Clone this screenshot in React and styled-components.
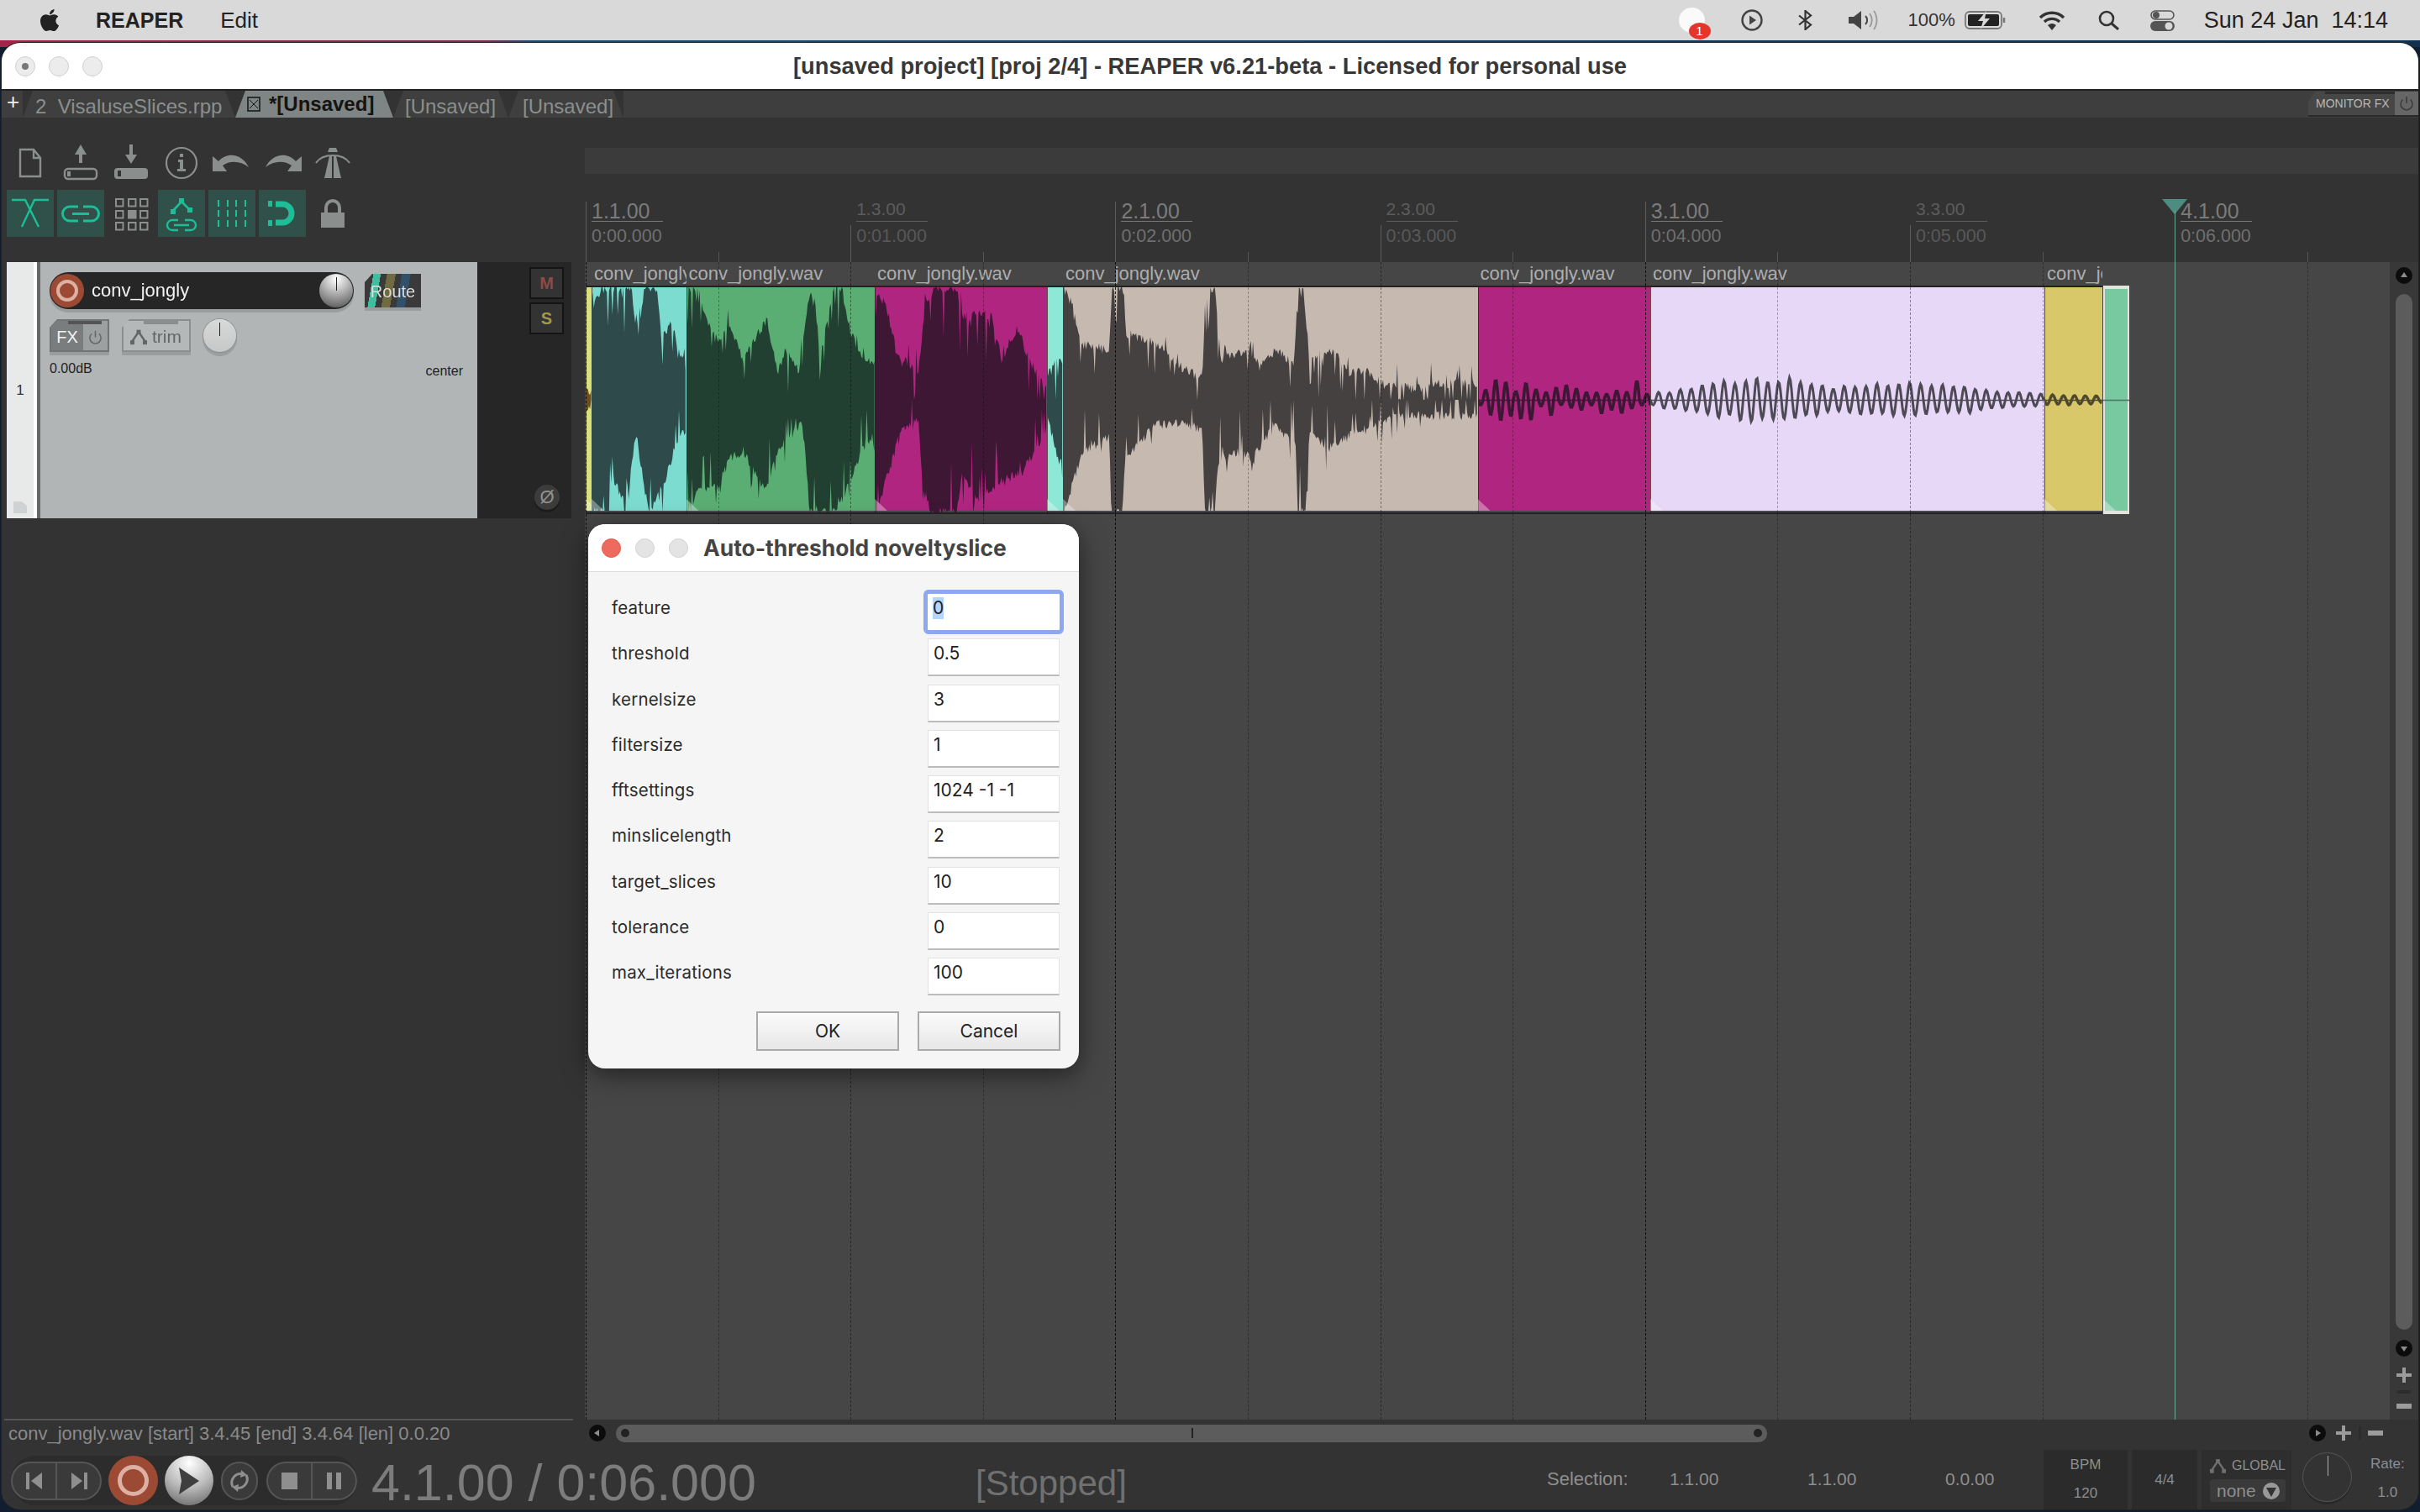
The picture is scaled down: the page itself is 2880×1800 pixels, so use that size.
import styled, { createGlobalStyle } from 'styled-components'
import { FaApple } from 'react-icons/fa'

const GlobalStyle = createGlobalStyle`
    html, body {
        margin: 0;
        padding: 0;
        background: #0f2238;
    }
    * { box-sizing: border-box; }
`

const SECOND = 315.2
const GREY = '#8a8f8e'
const TEAL = '#1dbd97'

// ---- waveform data, read off the screenshot ----

const z7 = pts => pts.map(([x, y]) => [690 + x / 1.96, 230 + y / 3])
const z8 = pts => pts.map(([x, y]) => [1480 + x / 1.425, 230 + y / 3])

function makeRandom(seed) {
    let s = seed
    return () => {
        s = (s * 16807) % 2147483647
        return s / 2147483647
    }
}

function lerp(pts, x) {
    if (x <= pts[0][0]) return pts[0][1]
    for (let i = 1; i < pts.length; i++) {
        if (x <= pts[i][0]) {
            const [x0, y0] = pts[i - 1]
            const [x1, y1] = pts[i]
            return y0 + ((y1 - y0) * (x - x0)) / (x1 - x0)
        }
    }
    return pts[pts.length - 1][1]
}

function spike(rand) {
    const r = rand()
    if (r > 0.86) return rand() * 55
    if (r < 0.06) return -rand() * 28
    return 0
}

function wavePath(top, bot, x0, x1, seed) {
    const rand = makeRandom(seed)
    const upper = []
    const lower = []
    for (let x = x0; x <= x1; x += 1.3) {
        const t = lerp(top, x) + (rand() - 0.5) * 12 + spike(rand)
        const b = lerp(bot, x) + (rand() - 0.5) * 12 - spike(rand)
        upper.push(`${x.toFixed(1)} ${Math.max(342, Math.min(476, t)).toFixed(1)}`)
        lower.unshift(`${x.toFixed(1)} ${Math.min(610, Math.max(476, b)).toFixed(1)}`)
    }
    return `M${upper.join('L')}L${lower.join('L')}Z`
}

function oscPath(amps, x0, x1, period, seed, wild) {
    const rand = makeRandom(seed)
    const out = []
    let lastHalf = -1
    let swing = 1
    for (let x = x0; x <= x1; x += 1.2) {
        const half = Math.floor((x - x0) / (period / 2))
        if (half !== lastHalf) {
            lastHalf = half
            swing = wild ? 0.35 + rand() * 0.95 : 0.8 + rand() * 0.3
        }
        const theta = (2 * Math.PI * (x - x0)) / period
        const y = 476 + Math.sin(theta) * lerp(amps, x) * swing
        out.push(`${x.toFixed(1)} ${y.toFixed(1)}`)
    }
    return `M${out.join('L')}`
}

const ITEMS = [
    {
        x0: 697, x1: 704, bg: '#d9e27a', ink: '#6b4d1e',
        top: z7([[13, 680], [28, 720]]), bot: z7([[13, 770], [28, 760]]),
    },
    {
        x0: 704, x1: 816.5, bg: '#7cdccf', ink: '#2f4a4a', name: 'conv_jongly.wav',
        top: z7([[30, 420], [45, 340], [100, 340], [120, 340], [135, 520], [150, 340], [180, 340], [190, 520], [215, 460], [230, 570], [245, 570]]),
        bot: z7([[30, 1140], [70, 1140], [75, 1000], [110, 1140], [130, 840], [160, 1140], [175, 1100], [200, 1020], [230, 870], [245, 850]]),
    },
    {
        x0: 816.5, x1: 1041, bg: '#5aad73', ink: '#224031', name: 'conv_jongly.wav',
        top: z7([[250, 340], [280, 340], [290, 440], [320, 520], [350, 480], [380, 590], [435, 450], [460, 640], [480, 560], [510, 640], [530, 400], [545, 340], [560, 590], [590, 340], [610, 340], [630, 490], [660, 600], [685, 600]]),
        bot: z7([[255, 1140], [280, 1050], [320, 1050], [350, 950], [380, 920], [430, 1060], [470, 900], [520, 820], [535, 1140], [600, 1140], [640, 980], [670, 880], [685, 910]]),
    },
    {
        x0: 1041, x1: 1246, bg: '#b02580', ink: '#3e1735', name: 'conv_jongly.wav',
        top: z7([[690, 340], [715, 400], [740, 580], [790, 640], [805, 400], [830, 340], [880, 340], [890, 440], [920, 430], [960, 440], [985, 600], [1020, 480], [1050, 600], [1085, 700]]),
        bot: z7([[690, 1140], [720, 1000], [750, 840], [790, 810], [800, 1050], [820, 1140], [880, 1140], [890, 1000], [930, 1100], [980, 1030], [1030, 1000], [1085, 850]]),
    },
    {
        x0: 1246, x1: 1265, bg: '#8ee8d8', ink: '#2f4a4a',
        top: z7([[1092, 640], [1115, 600], [1125, 600]]), bot: z7([[1092, 800], [1115, 950], [1125, 970]]),
    },
    {
        x0: 1265, x1: 1758.6, bg: '#c5b9b0', ink: '#454141', name: 'conv_jongly.wav',
        top: [
            ...z7([[1130, 340], [1150, 400], [1170, 540], [1235, 560], [1242, 340], [1268, 340], [1275, 500], [1350, 540], [1400, 620], [1452, 660], [1460, 340], [1482, 340], [1495, 600]]),
            ...z8([[0, 560], [30, 600], [60, 560], [85, 620], [92, 340], [100, 340], [112, 600], [150, 560], [180, 640], [210, 640], [240, 690], [300, 700], [330, 680], [395, 680]]),
        ],
        bot: [
            ...z7([[1130, 1140], [1170, 930], [1235, 870], [1240, 1140], [1265, 1140], [1272, 950], [1340, 830], [1400, 820], [1452, 840], [1458, 1140], [1480, 1140], [1490, 950]]),
            ...z8([[0, 920], [15, 950], [50, 830], [88, 900], [92, 1140], [105, 1140], [112, 850], [145, 910], [170, 880], [200, 840], [240, 810], [300, 790], [330, 795], [395, 800]]),
        ],
    },
    {
        x0: 1758.6, x1: 1964, bg: '#b02580', ink: '#3e1735', name: 'conv_jongly.wav',
        period: 12, stroke: 3.6, wild: true, line: true, amps: [[1758, 15], [1805, 24], [1860, 14], [1964, 18]],
    },
    {
        x0: 1964, x1: 2433, bg: '#e6d8f6', ink: '#4e4a55', name: 'conv_jongly.wav',
        period: 13, stroke: 3, line: true, amps: [[1964, 7], [2010, 14], [2070, 24], [2140, 25], [2180, 14], [2260, 20], [2330, 16], [2433, 6]],
    },
    {
        x0: 2433, x1: 2502, bg: '#d8c86a', ink: '#4f4a2e', name: 'conv_jongly.wav',
        period: 13, stroke: 3.4, line: true, amps: [[2433, 7], [2502, 4]],
    },
    { x0: 2503, x1: 2534, bg: '#78c8a0', ink: '#4a7a66', selected: true },
]

const RULER = [
    { bar: '1.1.00', time: '0:00.000', major: true },
    { bar: '1.3.00', time: '0:01.000' },
    { bar: '2.1.00', time: '0:02.000', major: true },
    { bar: '2.3.00', time: '0:03.000' },
    { bar: '3.1.00', time: '0:04.000', major: true },
    { bar: '3.3.00', time: '0:05.000' },
    { bar: '4.1.00', time: '0:06.000', major: true, plain: true },
]

const FIELDS = [
    ['feature', '0'],
    ['threshold', '0.5'],
    ['kernelsize', '3'],
    ['filtersize', '1'],
    ['fftsettings', '1024 -1 -1'],
    ['minslicelength', '2'],
    ['target_slices', '10'],
    ['tolerance', '0'],
    ['max_iterations', '100'],
]

// ---- page frame ----

const Page = styled.div`
    position: relative;
    width: 2880px;
    height: 1800px;
    display: flex;
    flex-direction: column;
    overflow: hidden;
    font-family: "Liberation Sans", Arial, sans-serif;
    background:
        linear-gradient(180deg, transparent 0 56px, #101e30 56px),
        linear-gradient(90deg, #a3244a 0, #7d2a4c 20%, #1f4a70 22%, #12304f 100%);
`

const MenuBar = styled.header`
    height: 48px;
    flex: none;
    display: flex;
    align-items: center;
    padding: 0 38px 0 44px;
    background: #d9d9d9;
    color: #222;
    font-size: 26px;
`

const MenuBold = styled.span`
    font-weight: 700;
    margin-left: 40px;
    font-size: 25px;
`

const MenuText = styled.span`
    margin-left: ${p => p.$ml || 0}px;
`

const MenuRight = styled.div`
    margin-left: auto;
    display: flex;
    align-items: center;
`

const MenuSlot = styled.div`
    display: flex;
    margin-left: ${p => p.$ml}px;
`

const Percent = styled.span`
    font-size: 22px;
    color: #333;
    margin-left: 35px;
`

const Clock = styled.span`
    margin-left: 35px;
    white-space: pre;
    font-size: 27px;
`

const Notify = styled.div`
    position: relative;
    width: 31px;
    height: 30px;
    border-radius: 50%;
    background: #fafafa;
`

const Badge = styled.span`
    position: absolute;
    right: -7px;
    bottom: -8px;
    width: 26px;
    height: 20px;
    border-radius: 50%;
    background: #e5352b;
    color: #fff;
    font-size: 15px;
    line-height: 20px;
    text-align: center;
`

const Desktop = styled.div`
    flex: 1;
    display: flex;
    padding: 3px 2px 3px 2px;
    min-height: 0;
`

const Window = styled.div`
    flex: 1;
    display: flex;
    flex-direction: column;
    border-radius: 22px;
    overflow: hidden;
    background: #333;
    box-shadow: 0 0 0 1px #222;
`

const TitleBar = styled.div`
    height: 57px;
    flex: none;
    display: flex;
    align-items: center;
    position: relative;
    justify-content: center;
    background: #fff;
    border-bottom: 2px solid #222;
    color: #383838;
    font-size: 27.3px;
    font-weight: 700;
`

const Lights = styled.div`
    position: absolute;
    left: 16px;
    display: flex;
    gap: 16px;
`

const Light = styled.span`
    width: 24px;
    height: 24px;
    border-radius: 50%;
    background: #ececec;
    border: 1px solid #cfcfcf;
    display: flex;
    align-items: center;
    justify-content: center;

    &::after {
        content: "";
        display: ${p => (p.$dot ? 'block' : 'none')};
        width: 8px;
        height: 8px;
        border-radius: 50%;
        background: #777;
    }
`

// ---- tabs ----

const TabBar = styled.div`
    height: 32px;
    flex: none;
    display: flex;
    background: #333;
    font-size: 24px;
`

const PlusTab = styled.div`
    width: 25px;
    background: #3e3e3e;
    color: #eee;
    font-size: 26px;
    line-height: 26px;
    padding-left: 6px;
`

const Tab = styled.div`
    display: flex;
    align-items: flex-start;
    gap: 10px;
    width: ${p => p.$w}px;
    padding-left: ${p => p.$pad}px;
    padding-top: ${p => (p.$active ? 2 : 5)}px;
    white-space: pre;
    overflow: hidden;
    line-height: 28px;
    background: ${p => (p.$active ? '#7e8584' : '#3f3f3f')};
    color: ${p => (p.$active ? '#141414' : '#8b8f8e')};
    font-weight: ${p => (p.$active ? 700 : 400)};
    clip-path: polygon(12px 0, calc(100% - 12px) 0, 100% 100%, 0 100%);
`

const TabFill = styled.div`
    flex: 1;
    background: #3e3e3e;
    display: flex;
    justify-content: flex-end;
`

const MonitorFx = styled.div`
    position: relative;
    width: 131px;
    height: 30px;
    margin-top: 1px;
    display: flex;
    align-items: center;
    justify-content: space-between;
    padding-left: 9px;
    background: #474747;
    border-bottom: 2px solid #2a2a2a;
    color: #b8b8b8;
    font-size: 14px;
    white-space: nowrap;
    clip-path: polygon(8px 0, 100% 0, 100% 100%, 0 100%, 0 12px);

    &::before {
        content: "";
        position: absolute;
        left: 20px;
        right: 28px;
        top: 0;
        height: 3px;
        background: #2f2f2f;
    }
`

const MonitorPower = styled.div`
    width: 28px;
    height: 100%;
    background: #666;
    display: flex;
    align-items: center;
    justify-content: center;
`

// ---- main area ----

const Main = styled.div`
    flex: 1;
    display: flex;
    min-height: 0;
`

const LeftColumn = styled.div`
    width: 694px;
    flex: none;
    display: flex;
    flex-direction: column;
`

const Toolbar = styled.div`
    height: 172px;
    padding: 26px 0 0 6px;
    display: grid;
    grid-template-columns: repeat(7, 56px);
    grid-template-rows: 56px 56px;
    gap: 4px;
`

const ToolButton = styled.div`
    width: 56px;
    height: 56px;
    background: ${p => (p.$on ? '#2f5149' : 'transparent')};
    display: flex;

    svg { display: block; }
`

const TrackRow = styled.div`
    height: 305px;
    margin-left: 6px;
    display: flex;
`

const TrackNumber = styled.div`
    width: 32px;
    position: relative;
    background: #e8e9e9;
    color: #333;
    font-size: 17px;
    display: flex;
    align-items: center;
    justify-content: center;
    padding-top: 1px;

    &::after {
        content: "";
        position: absolute;
        left: 8px;
        bottom: 6px;
        width: 16px;
        height: 14px;
        background: #cfd2d2;
        clip-path: polygon(0 0, 60% 0, 100% 35%, 100% 100%, 0 100%);
    }
`

const TrackStripe = styled.div`
    width: 8px;
    background: linear-gradient(90deg, #fff 0 4px, #666 4px 8px);
`

const TrackPanel = styled.div`
    width: 520px;
    background: #b1b5b5;
    display: flex;
    flex-direction: column;
    padding: 12px 17px 0 11px;
`

const TrackTop = styled.div`
    display: flex;
    align-items: center;
    gap: 13px;
    filter: drop-shadow(0 4px 0 rgba(0, 0, 0, 0.13));
`

const NamePill = styled.div`
    width: 362px;
    height: 44px;
    border-radius: 22px;
    background: #262626;
    display: flex;
    align-items: center;
    padding: 0 1px;
`

const RecordButton = styled.div`
    width: ${p => p.$size}px;
    height: ${p => p.$size}px;
    border-radius: 50%;
    flex: none;
    background: #9c4a33;
    display: flex;
    align-items: center;
    justify-content: center;

    &::after {
        content: "";
        width: ${p => p.$size * 0.46}px;
        height: ${p => p.$size * 0.46}px;
        border: ${p => p.$size * 0.1}px solid #dcb0a3;
        border-radius: 50%;
    }
`

const TrackName = styled.span`
    color: #f2f2f2;
    font-size: 22px;
    margin-left: 9px;
`

const Knob = styled.div`
    width: ${p => p.$size}px;
    height: ${p => p.$size}px;
    border-radius: 50%;
    flex: none;
    position: relative;
    margin-left: ${p => (p.$push ? 'auto' : '0')};
    background: ${p => (p.$flat ? 'linear-gradient(#d8dada, #c6c8c8)' : 'radial-gradient(circle at 50% 15%, #fff, #a5a5a5 50%, #4a4a4a 100%)')};
    box-shadow: ${p => (p.$flat ? '0 0 0 1px #8f9292' : 'none')};

    &::after {
        content: "";
        position: absolute;
        left: calc(50% - 0.5px);
        top: 4px;
        width: 1px;
        height: 16px;
        background: #222;
    }
`

const RouteButton = styled.div`
    width: 67px;
    height: 40px;
    display: flex;
    align-items: center;
    justify-content: center;
    padding-top: 3px;
    color: #ddd;
    font-size: 20px;
    background: linear-gradient(100deg, #3a3a3a 0 14%, #3fbfa0 14% 26%, #3a3a3a 26% 36%, #6f6a3f 36% 50%, #3a3a3a 50% 60%, #33506b 60% 74%, #3a3a3a 74%);
    clip-path: polygon(9px 0, 100% 0, 100% 100%, 0 100%, 0 10px);
`

const TrackSecond = styled.div`
    display: flex;
    align-items: center;
    margin-top: 12px;
    gap: 15px;
    filter: drop-shadow(0 4px 0 rgba(0, 0, 0, 0.13));
`

const FxButton = styled.div`
    position: relative;
    width: 71px;
    height: 39px;
    padding: 2px;
    display: flex;
    clip-path: polygon(9px 0, 100% 0, 100% 100%, 0 100%, 0 10px);
    background: #727575;

    &::before {
        content: "";
        position: absolute;
        left: 22px;
        right: 9px;
        top: 2px;
        height: 4px;
        background: #555;
    }
`

const FxLabel = styled.span`
    width: 38px;
    background: #7a7d7d;
    color: #f2f2f2;
    font-size: 20px;
    display: flex;
    align-items: center;
    justify-content: center;
    padding-top: 4px;
`

const FxPower = styled.span`
    flex: 1;
    background: #9da0a0;
    display: flex;
    align-items: center;
    justify-content: center;
    padding-top: 3px;
`

const TrimButton = styled.div`
    position: relative;
    width: 82px;
    height: 39px;
    display: flex;
    align-items: center;
    gap: 5px;
    padding: 3px 0 0 7px;
    color: #666;
    font-size: 21px;
    border: 2px solid #8b8e8e;
    background: #b4b8b8;
    clip-path: polygon(9px 0, 100% 0, 100% 100%, 0 100%, 0 10px);

    &::before {
        content: "";
        position: absolute;
        left: 24px;
        right: 13px;
        top: 0;
        height: 4px;
        background: #8b8e8e;
    }
`

const TrackLabels = styled.div`
    display: flex;
    justify-content: space-between;
    color: #222;
    font-size: 16px;
    margin-top: 11px;
`

const TrackLabelRight = styled.span`
    margin-top: 3px;
`

const TrackControls = styled.div`
    width: 112px;
    background: #262626;
    display: flex;
    flex-direction: column;
    align-items: flex-end;
    padding: 6px 9px 0 0;
    gap: 4px;
`

const MuteButton = styled.div`
    width: 41px;
    height: 38px;
    background: #333;
    border: 2px solid #141414;
    color: ${p => p.$color};
    font-size: 20px;
    font-weight: 700;
    display: flex;
    align-items: center;
    justify-content: center;
`

const PhaseButton = styled.div`
    margin: auto 5px 10px 0;
    width: 30px;
    height: 30px;
    border-radius: 50%;
    background: #3c3c3c;
    box-shadow: 0 3px 0 #1c1c1c;
    color: #909090;
    font-size: 22px;
    display: flex;
    align-items: center;
    justify-content: center;
`

const LeftFill = styled.div`
    flex: 1;
`

const StatusLine = styled.div`
    height: 33px;
    margin: 0 14px 0 3px;
    padding: 3px 0 0 5px;
    border-top: 2px solid #555;
    color: #8a8a8a;
    font-size: 22px;
    white-space: nowrap;
`

const RightColumn = styled.div`
    flex: 1;
    display: flex;
    flex-direction: column;
    position: relative;
    min-width: 0;
`

const TopStrip = styled.div`
    height: 68px;
    flex: none;
    padding-top: 36px;

    &::after {
        content: "";
        display: block;
        height: 31px;
        background: #3b3b3b;
    }
`

const Ruler = styled.div`
    height: 104px;
    flex: none;
    padding-left: 1px;
    display: flex;
    overflow: hidden;
`

const RulerCell = styled.div`
    width: ${SECOND}px;
    flex: none;
    position: relative;
    padding-left: 7px;

    &::before {
        content: "";
        display: ${p => (p.$plain ? 'none' : 'block')};
        position: absolute;
        left: 0;
        bottom: 0;
        width: 1px;
        height: ${p => (p.$major ? 72 : 44)}px;
        background: #5c5c5c;
    }

    &::after {
        content: "";
        position: absolute;
        left: ${SECOND / 2}px;
        bottom: 0;
        width: 1px;
        height: 12px;
        background: #555;
    }
`

const RulerBar = styled.div`
    width: 85px;
    height: 56px;
    display: flex;
    align-items: flex-end;
    border-bottom: 1px solid ${p => (p.$major ? '#777' : '#5c5c5c')};
    color: ${p => (p.$major ? '#7b7b7b' : '#5c5c5c')};
    font-size: ${p => (p.$major ? 25 : 21)}px;
    line-height: ${p => (p.$major ? 24 : 28)}px;
`

const RulerTime = styled.div`
    margin-top: 5px;
    color: ${p => (p.$major ? '#6f6f6f' : '#585858')};
    font-size: 21.5px;
`

const CursorMark = styled.div`
    position: absolute;
    left: 1877px;
    top: 97px;
    bottom: 32px;
    width: 30px;
    display: flex;
    flex-direction: column;
    align-items: center;
    z-index: 3;

    svg { flex: none; display: block; }
`

const CursorLine = styled.div`
    width: 1px;
    flex: 1;
    margin-top: -4px;
    background: #6fa79b;
`

const ArrangeRow = styled.div`
    flex: 1;
    display: flex;
    min-height: 0;
`

const Arrange = styled.div`
    flex: 1;
    position: relative;
    overflow: hidden;
    background: #464646;
`

const GridOverlay = styled.div`
    position: absolute;
    inset: 0;
    padding-left: 1px;
    display: flex;
    z-index: 2;
`

const GridCell = styled.div`
    width: ${SECOND / 2}px;
    flex: none;
    border-left: 1px dashed ${p => p.$color};
`

const Lane = styled.div`
    height: 300px;
    padding-left: 1px;
    display: flex;
`

const Item = styled.div`
    width: ${p => p.$w}px;
    margin-left: ${p => p.$ml || 0}px;
    flex: none;
    display: flex;
    flex-direction: column;
`

const ItemName = styled.div`
    height: 28px;
    padding-left: 3px;
    color: #adadad;
    font-size: 22px;
    line-height: 27px;
    white-space: nowrap;
    overflow: hidden;
`

const ItemBody = styled.div`
    flex: 1;
    position: relative;
    background: ${p => p.$bg};
    border-top: 2px solid ${p => (p.$selected ? '#e4e4de' : '#222')};
    border-bottom: 2px solid ${p => (p.$selected ? '#e4e4de' : '#222')};
    box-shadow: ${p => (p.$selected ? 'inset 0 2px 0 #e4e4de, inset 0 -2px 0 #e4e4de, inset 2px 0 0 #e4e4de, inset -2px 0 0 #e4e4de' : 'inset 1px 0 0 rgba(60,20,10,.7), inset 0 -2px 0 #4a4650')};

    svg {
        display: block;
        width: 100%;
        height: 100%;
    }

    &::after {
        content: "";
        position: absolute;
        left: 0;
        bottom: 2px;
        width: 15px;
        height: 14px;
        background: rgba(255, 255, 255, 0.35);
        clip-path: polygon(0 0, 100% 100%, 0 100%);
    }
`

const VScroll = styled.div`
    width: 34px;
    flex: none;
    display: flex;
    flex-direction: column;
    align-items: center;
    padding: 6px 0 13px;
    background: #383838;
`

const VThumb = styled.div`
    width: 20px;
    flex: 1;
    margin: 12px 0;
    border-radius: 10px;
    background: #5c5c5c;
`

const VPlus = styled.div`
    display: flex;
    margin-top: 13px;
`

const VSep = styled.div`
    width: 16px;
    height: 4px;
    margin: 9px 0 12px;
    background: #2c2c2c;
`

const HScroll = styled.div`
    height: 32px;
    flex: none;
    display: flex;
    align-items: center;
    padding: 0 42px 0 5px;
`

const HThumb = styled.div`
    width: 1370px;
    height: 21px;
    margin-left: 12px;
    border-radius: 10px;
    background: #5c5c5c;
    position: relative;
    display: flex;
    align-items: center;
    justify-content: space-between;
    padding: 0 6px;

    &::after {
        content: "";
        position: absolute;
        left: 685px;
        top: 4px;
        width: 2px;
        height: 12px;
        background: #222;
    }
`

const ThumbDot = styled.span`
    width: 10px;
    height: 10px;
    border-radius: 50%;
    background: #222;
`

const HRight = styled.div`
    margin-left: auto;
    display: flex;
    align-items: center;
`

const HPlus = styled.div`
    display: flex;
    margin-left: 12px;
`

const HSep = styled.div`
    width: 3px;
    height: 16px;
    margin: 0 8px 0 9px;
    background: #2c2c2c;
`

// ---- transport ----

const Transport = styled.div`
    height: 75px;
    flex: none;
    display: flex;
    align-items: stretch;
    padding: 4px 0 0 11px;
    color: #8e8e8e;
`

const TransportGroup = styled.div`
    display: flex;
    align-items: center;
    height: 59px;
    margin-top: 7px;
    background: #2c2c2c;
    border-radius: 30px;
`

const TransportPill = styled.div`
    width: ${p => p.$w}px;
    height: 46px;
    margin-left: ${p => p.$ml || 0}px;
    border: 2px solid #555;
    border-radius: 23px;
    background: #3a3a3a;
    display: flex;
    align-items: center;
`

const PillHalf = styled.div`
    flex: 1;
    height: 100%;
    display: flex;
    align-items: center;
    justify-content: center;

    & + & {
        border-left: 2px solid #555;
    }
`

const PlayButton = styled.div`
    width: 58px;
    height: 59px;
    margin-left: 8px;
    border-radius: 50%;
    background: radial-gradient(circle at 50% 15%, #fff, #bbb 50%, #5e5e5e 100%);
    display: flex;
    align-items: center;
    justify-content: center;
`

const RecordSlot = styled.div`
    margin-left: 8px;
`

const TimeDisplay = styled.div`
    width: 719px;
    margin-left: 17px;
    padding-top: 8px;
    color: #7c7c7c;
    font-size: 61px;
    line-height: 62px;
    white-space: nowrap;
`

const StoppedText = styled.div`
    width: 680px;
    padding-top: 15px;
    color: #707070;
    font-size: 42px;
    line-height: 50px;
`

const SelCell = styled.div`
    width: ${p => p.$w}px;
    padding-top: 22px;
    font-size: ${p => p.$size}px;
    line-height: 26px;
`

const InfoBox = styled.div`
    width: ${p => p.$w}px;
    margin-right: 5px;
    background: #2b2b2b;
    color: #8e8e8e;
    font-size: 17px;
    display: flex;
    flex-direction: column;
    align-items: center;
    justify-content: ${p => (p.$split ? 'space-between' : 'center')};
    padding: ${p => (p.$split ? '8px 0 9px' : '0')};
`

const GlobalBox = styled.div`
    width: 107px;
    background: #2e2e2e;
    padding: 6px 7px 0 10px;
`

const GlobalHead = styled.div`
    display: flex;
    align-items: center;
    gap: 7px;
    font-size: 16px;
    height: 26px;
`

const NonePill = styled.div`
    height: 27px;
    margin-top: 3px;
    width: 90px;
    border-radius: 4px;
    background: #3a3a3a;
    display: flex;
    align-items: center;
    gap: 8px;
    padding-left: 8px;
    font-size: 21px;
`

const RateKnob = styled.div`
    width: 59px;
    height: 59px;
    margin: 3px 0 0 13px;
    position: relative;
    border-radius: 50%;
    border: 1px solid #555;
    box-shadow: 0 3px 0 #2a2a2a;

    &::after {
        content: "";
        position: absolute;
        left: 29px;
        top: 3px;
        width: 1px;
        height: 24px;
        background: #aaa;
    }
`

const RateBox = styled.div`
    margin-left: 22px;
    display: flex;
    flex-direction: column;
    align-items: center;
    gap: 14px;
    font-size: 17px;
    padding-top: 7px;
`

// ---- dialog ----

const Dialog = styled.div`
    position: absolute;
    left: 700px;
    top: 624px;
    width: 584px;
    height: 648px;
    z-index: 5;
    border-radius: 20px;
    overflow: hidden;
    background: #f5f5f5;
    box-shadow: 0 8px 30px rgba(0, 0, 0, 0.5);
    font-family: Inter, "Liberation Sans", sans-serif;
`

const DialogTitle = styled.div`
    height: 57px;
    display: flex;
    align-items: center;
    gap: 18px;
    padding-left: 16px;
    background: #fff;
    border-bottom: 1px solid #dcdcdc;
    color: #444;
    font-size: 26.4px;
    font-weight: 700;
    white-space: nowrap;
`

const DialogLights = styled.div`
    display: flex;
    gap: 17px;
`

const DialogLight = styled.span`
    width: 23px;
    height: 23px;
    border-radius: 50%;
    background: ${p => (p.$red ? '#ee6a5f' : '#e4e4e4')};
    border: 1px solid ${p => (p.$red ? '#e0564b' : '#d2d2d2')};
`

const DialogBody = styled.div`
    padding: 25px 23px 0 28px;
`

const FieldRow = styled.div`
    height: 45px;
    margin-bottom: 9.25px;
    display: flex;
    justify-content: space-between;
    color: #2b2b2b;
    font-size: 20.5px;
`

const FieldLabel = styled.span`
    line-height: 36px;
    letter-spacing: 0.2px;
`

const FieldBox = styled.div`
    width: 157px;
    height: 45px;
    padding-left: 6px;
    background: #fff;
    border: 1px solid #e2e2e2;
    border-bottom: 2px solid #bcbcbc;
    font-size: 21px;
    line-height: 33px;
    color: #222;
    ${p => p.$focus && `
        border: 0;
        outline: 5px solid #8ba9ec;
        outline-offset: 0;
        border-radius: 1px;
        height: 43px;
        margin-top: 1px;
    `}
`

const Selected = styled.span`
    background: #b3d4fd;
    display: inline-block;
    line-height: 26px;
`

const DialogButtons = styled.div`
    display: flex;
    justify-content: flex-end;
    gap: 22px;
    margin: 19px -1px 0 0;
`

const DialogButton = styled.div`
    width: 170px;
    height: 47px;
    border: 2px solid #aaa;
    background: linear-gradient(#fbfbfb, #e7e7e7);
    color: #222;
    font-size: 21px;
    display: flex;
    align-items: center;
    justify-content: center;
`

// ---- icons ----

const Svg = ({ w = 56, h = 56, children }) => (
    <svg width={w} height={h} viewBox={`0 0 ${w} ${h}`} fill="none">{children}</svg>
)

const NewDocIcon = () => (
    <Svg><path d="M16 12H32L40 22V44H16ZM32 12V22H40" stroke={GREY} strokeWidth="2.4" /></Svg>
)

const UploadIcon = () => (
    <Svg>
        <path d="M28 6L35 18H30V28H26V18H21Z" fill={GREY} />
        <rect x="9" y="35" width="38" height="12" rx="4" stroke={GREY} strokeWidth="2.4" />
        <rect x="12" y="38" width="4" height="6" fill={GREY} />
    </Svg>
)

const DownloadIcon = () => (
    <Svg>
        <path d="M26 6H30V18H35L28 29L21 18H26Z" fill={GREY} />
        <rect x="8" y="34" width="40" height="13" rx="4" fill={GREY} />
        <rect x="12" y="37" width="4" height="7" fill="#333" />
    </Svg>
)

const InfoIcon = () => (
    <Svg>
        <circle cx="28" cy="28" r="18" stroke={GREY} strokeWidth="2.2" />
        <rect x="26" y="17" width="4" height="4" fill={GREY} />
        <path d="M24 24H30V35H33V38H23V35H26V27H24Z" fill={GREY} />
    </Svg>
)

const UndoIcon = () => (
    <Svg><path d="M5 20V38H22L17 31C25 25 38 25 48 33C40 17 23 14 12 26Z" fill={GREY} /></Svg>
)

const RedoIcon = () => (
    <Svg><path d="M51 20V38H34L39 31C31 25 18 25 8 33C16 17 33 14 44 26Z" fill={GREY} /></Svg>
)

const MetronomeIcon = () => (
    <Svg>
        <path d="M8 28C16 16 40 16 48 28" stroke={GREY} strokeWidth="2.2" />
        <path d="M24 10H32L34 15H22Z" fill={GREY} />
        <path d="M24 20H27V46H18ZM29 20H32L38 46H29Z" fill={GREY} />
    </Svg>
)

const CrossfadeIcon = () => (
    <Svg><path d="M6 12H22L38 44M50 12H33L18 44" stroke={TEAL} strokeWidth="2.4" /></Svg>
)

const LinkIcon = () => (
    <Svg>
        <path d="M25 20H15a8.5 8.5 0 0 0 0 17H25M31 20H41a8.5 8.5 0 0 1 0 17H31M18 28.5H38" stroke={TEAL} strokeWidth="3" />
    </Svg>
)

const GridIcon = () => (
    <Svg>
        {[12, 26, 40].map(y => [10, 25, 39].map(x => (
            <rect
                key={`${x}-${y}`}
                x={x} y={y - 1} width="8.5" height="8.5"
                fill={x === 25 && y === 26 ? GREY : 'none'}
                stroke={GREY} strokeWidth="2"
            />
        )))}
    </Svg>
)

const EnvLinkIcon = () => (
    <Svg>
        <path d="M16 27L28 14L38 24" stroke={TEAL} strokeWidth="2.6" />
        <rect x="25" y="10" width="6" height="6" fill={TEAL} />
        <rect x="15" y="23" width="6" height="6" fill={TEAL} />
        <rect x="35" y="21" width="6" height="6" fill={TEAL} />
        <path d="M24 36H17a6 6 0 0 0 0 12H24M32 36H39a6 6 0 0 1 0 12H32M19 42H37" stroke={TEAL} strokeWidth="2.4" />
    </Svg>
)

const GridLinesIcon = () => (
    <Svg>
        <path d="M12 12V44M23 12V44M33 12V44M44 12V44" stroke={TEAL} strokeWidth="2" strokeDasharray="8 4" />
    </Svg>
)

const MagnetIcon = () => (
    <Svg>
        <path d="M20 17H28A11 11 0 0 1 28 39H20" stroke={TEAL} strokeWidth="7" />
        <rect x="11" y="13" width="5" height="7" fill={TEAL} />
        <rect x="11" y="36" width="5" height="7" fill={TEAL} />
    </Svg>
)

const LockIcon = () => (
    <Svg>
        <path d="M20 28V21a8 8 0 0 1 16 0V28" stroke={GREY} strokeWidth="4" />
        <rect x="14" y="27" width="28" height="18" fill={GREY} />
    </Svg>
)

const PowerIcon = ({ color = '#555', size = 20 }) => (
    <svg width={size} height={size} viewBox="0 0 20 20" fill="none">
        <path d="M10 2V10M5.5 5.5a7 7 0 1 0 9 0" stroke={color} strokeWidth="1.6" />
    </svg>
)

const EnvIcon = ({ color, w = 24, h = 24 }) => (
    <svg width={w} height={h} viewBox="0 0 24 24" fill={color}>
        <path d="M1 21L12 5L23 21" fill="none" stroke={color} strokeWidth="3" />
        <rect x="0" y="17" width="6" height="6" />
        <rect x="9" y="2" width="6" height="6" />
        <rect x="18" y="17" width="6" height="6" />
    </svg>
)

const CircleArrow = ({ dir }) => {
    const rot = { up: 0, down: 180, left: 270, right: 90 }[dir]
    return (
        <svg width="20" height="20" viewBox="0 0 20 20" style={{ flex: 'none' }}>
            <circle cx="10" cy="10" r="10" fill="#0c0c0c" />
            <path d="M10 6L14 12H6Z" fill="#8c8c8c" transform={`rotate(${rot} 10 10)`} />
        </svg>
    )
}

const PlusGlyph = () => (
    <svg width="18" height="18" viewBox="0 0 18 18"><path d="M7 0H11V7H18V11H11V18H7V11H0V7H7Z" fill="#9c9c9c" /></svg>
)

const MinusGlyph = () => (
    <svg width="18" height="6" viewBox="0 0 18 6" style={{ flex: 'none' }}><rect width="18" height="6" fill="#9c9c9c" /></svg>
)

const Tri = ({ d, w = 22, h = 22, fill = '#8f8f8f' }) => (
    <svg width={w} height={h} viewBox={`0 0 ${w} ${h}`}><path d={d} fill={fill} /></svg>
)

const Waveform = ({ item, seed }) => {
    const { x0, x1, ink } = item
    const view = `${x0} 342 ${x1 - x0} 268`
    return (
        <svg viewBox={view} preserveAspectRatio="none">
            {item.top && <path d={wavePath(item.top, item.bot, x0, x1, seed)} fill={ink} />}
            {item.amps && (
                <path d={oscPath(item.amps, x0, x1, item.period, seed, item.wild)} fill="none" stroke={ink} strokeWidth={item.stroke} />
            )}
            {(item.line || item.selected) && <path d={`M${x0} 476.5H${x1}`} stroke={ink} strokeWidth="1.6" />}
        </svg>
    )
}

function MenuIcons() {
    return (
        <MenuRight>
            <Notify><Badge>1</Badge></Notify>
            <MenuSlot $ml={43}>
                <svg width="26" height="26" viewBox="0 0 26 26" fill="none">
                    <circle cx="13" cy="13" r="11.5" stroke="#444" strokeWidth="2.4" />
                    <path d="M10 7.5L18 13L10 18.5Z" fill="#444" />
                </svg>
            </MenuSlot>
            <MenuSlot $ml={42}>
                <svg width="17" height="24" viewBox="0 0 17 24" fill="none">
                    <path d="M1 6.5L15 17.5L8.5 23V1L15 6.5L1 17.5" stroke="#333" strokeWidth="2.2" />
                </svg>
            </MenuSlot>
            <MenuSlot $ml={43}>
                <svg width="36" height="24" viewBox="0 0 36 24" fill="none">
                    <path d="M0 8H6L15 1V23L6 16H0Z" fill="#444" />
                    <path d="M20 7a7 7 0 0 1 0 10" stroke="#444" strokeWidth="2" />
                    <path d="M25 4a13 13 0 0 1 0 16M30 1a19 19 0 0 1 0 22" stroke="#999" strokeWidth="1.8" />
                </svg>
            </MenuSlot>
            <Percent>100%</Percent>
            <MenuSlot $ml={11}>
                <svg width="50" height="22" viewBox="0 0 50 22" fill="none">
                    <rect x="1" y="1" width="43" height="20" rx="5" stroke="#777" strokeWidth="1.8" />
                    <rect x="4" y="4" width="37" height="14" rx="2" fill="#222" />
                    <path d="M47 8V14" stroke="#777" strokeWidth="2.5" />
                    <path d="M26 0L16 12H22L19 22L30 9H24Z" fill="#d9d9d9" />
                </svg>
            </MenuSlot>
            <MenuSlot $ml={38}>
                <svg width="32" height="24" viewBox="0 0 32 24" fill="none">
                    <path d="M2 9a20 20 0 0 1 28 0M7 14a13 13 0 0 1 18 0" stroke="#333" strokeWidth="3.4" />
                    <path d="M11 18Q16 14 21 18L16 24Z" fill="#333" />
                </svg>
            </MenuSlot>
            <MenuSlot $ml={39}>
                <svg width="25" height="24" viewBox="0 0 25 24" fill="none">
                    <circle cx="10" cy="10" r="8" stroke="#333" strokeWidth="2.6" />
                    <path d="M16 16L24 23" stroke="#333" strokeWidth="3" />
                </svg>
            </MenuSlot>
            <MenuSlot $ml={37}>
                <svg width="29" height="25" viewBox="0 0 29 25" fill="none">
                    <rect x="1" y="1" width="27" height="10" rx="5" stroke="#555" strokeWidth="1.6" />
                    <circle cx="7" cy="6" r="4" fill="#555" />
                    <rect x="0" y="13" width="29" height="12" rx="6" fill="#555" />
                    <circle cx="22" cy="19" r="4.5" fill="#d9d9d9" />
                </svg>
            </MenuSlot>
            <Clock>Sun 24 Jan  14:14</Clock>
        </MenuRight>
    )
}

function TrackHeader() {
    return (
        <TrackRow>
            <TrackNumber>1</TrackNumber>
            <TrackStripe />
            <TrackPanel>
                <TrackTop>
                    <NamePill>
                        <RecordButton $size={40} />
                        <TrackName>conv_jongly</TrackName>
                        <Knob $size={40} $push />
                    </NamePill>
                    <RouteButton>Route</RouteButton>
                </TrackTop>
                <TrackSecond>
                    <FxButton>
                        <FxLabel>FX</FxLabel>
                        <FxPower><PowerIcon color="#666" size={19} /></FxPower>
                    </FxButton>
                    <TrimButton><EnvIcon color="#666" w={22} h={20} />trim</TrimButton>
                    <Knob $size={39} $flat />
                </TrackSecond>
                <TrackLabels>
                    <span>0.00dB</span>
                    <TrackLabelRight>center</TrackLabelRight>
                </TrackLabels>
            </TrackPanel>
            <TrackControls>
                <MuteButton $color="#8c4b47">M</MuteButton>
                <MuteButton $color="#a09a4a">S</MuteButton>
                <PhaseButton>Ø</PhaseButton>
            </TrackControls>
        </TrackRow>
    )
}

function NoveltyDialog() {
    return (
        <Dialog>
            <DialogTitle>
                <DialogLights>
                    <DialogLight $red />
                    <DialogLight />
                    <DialogLight />
                </DialogLights>
                Auto-threshold noveltyslice
            </DialogTitle>
            <DialogBody>
                {FIELDS.map(([label, value], i) => (
                    <FieldRow key={label}>
                        <FieldLabel>{label}</FieldLabel>
                        <FieldBox $focus={i === 0}>
                            {i === 0 ? <Selected>{value}</Selected> : value}
                        </FieldBox>
                    </FieldRow>
                ))}
                <DialogButtons>
                    <DialogButton>OK</DialogButton>
                    <DialogButton>Cancel</DialogButton>
                </DialogButtons>
            </DialogBody>
        </Dialog>
    )
}

export default function App() {
    return (
        <Page>
            <GlobalStyle />
            <MenuBar>
                <FaApple size={30} color="#222" />
                <MenuBold>REAPER</MenuBold>
                <MenuText $ml={44}>Edit</MenuText>
                <MenuIcons />
            </MenuBar>
            <Desktop>
                <Window>
                    <TitleBar>
                        <Lights>
                            <Light $dot />
                            <Light />
                            <Light />
                        </Lights>
                        [unsaved project] [proj 2/4] - REAPER v6.21-beta - Licensed for personal use
                    </TitleBar>
                    <TabBar>
                        <PlusTab>+</PlusTab>
                        <Tab $w={253} $pad={15}>2  VisaluseSlices.rpp</Tab>
                        <Tab $active $w={188} $pad={14}>
                            <svg width="16" height="18" viewBox="0 0 16 18" fill="none" style={{ marginTop: 5 }}>
                                <rect x="1" y="1" width="14" height="16" stroke="#141414" strokeWidth="1.5" />
                                <path d="M3 4L13 14M13 4L3 14" stroke="#141414" />
                            </svg>
                            *[Unsaved]
                        </Tab>
                        <Tab $w={137} $pad={14}>[Unsaved]</Tab>
                        <Tab $w={137} $pad={17}>[Unsaved]</Tab>
                        <TabFill>
                            <MonitorFx>
                                MONITOR FX
                                <MonitorPower><PowerIcon color="#3c3c3c" size={20} /></MonitorPower>
                            </MonitorFx>
                        </TabFill>
                    </TabBar>
                    <Main>
                        <LeftColumn>
                            <Toolbar>
                                <ToolButton><NewDocIcon /></ToolButton>
                                <ToolButton><UploadIcon /></ToolButton>
                                <ToolButton><DownloadIcon /></ToolButton>
                                <ToolButton><InfoIcon /></ToolButton>
                                <ToolButton><UndoIcon /></ToolButton>
                                <ToolButton><RedoIcon /></ToolButton>
                                <ToolButton><MetronomeIcon /></ToolButton>
                                <ToolButton $on><CrossfadeIcon /></ToolButton>
                                <ToolButton $on><LinkIcon /></ToolButton>
                                <ToolButton><GridIcon /></ToolButton>
                                <ToolButton $on><EnvLinkIcon /></ToolButton>
                                <ToolButton $on><GridLinesIcon /></ToolButton>
                                <ToolButton $on><MagnetIcon /></ToolButton>
                                <ToolButton><LockIcon /></ToolButton>
                            </Toolbar>
                            <TrackHeader />
                            <LeftFill />
                            <StatusLine>conv_jongly.wav [start] 3.4.45 [end] 3.4.64 [len] 0.0.20</StatusLine>
                        </LeftColumn>
                        <RightColumn>
                            <TopStrip />
                            <Ruler>
                                {RULER.map(m => (
                                    <RulerCell key={m.bar} $major={m.major} $plain={m.plain}>
                                        <RulerBar $major={m.major}>{m.bar}</RulerBar>
                                        <RulerTime $major={m.major}>{m.time}</RulerTime>
                                    </RulerCell>
                                ))}
                            </Ruler>
                            <CursorMark>
                                <svg width="30" height="18" viewBox="0 0 30 18"><path d="M0 0H30L15 18Z" fill="#4d8d80" /></svg>
                                <CursorLine />
                            </CursorMark>
                            <ArrangeRow>
                                <Arrange>
                                    <Lane>
                                        {ITEMS.map((item, i) => (
                                            <Item key={item.x0} $w={item.x1 - item.x0} $ml={item.selected ? 1 : 0}>
                                                <ItemName>{item.name}</ItemName>
                                                <ItemBody $bg={item.bg} $selected={item.selected}>
                                                    <Waveform item={item} seed={101 + i * 977} />
                                                </ItemBody>
                                            </Item>
                                        ))}
                                    </Lane>
                                    <GridOverlay>
                                        {Array.from({ length: 14 }, (_, i) => (
                                            <GridCell
                                                key={i}
                                                $color={i % 4 === 0 ? 'rgba(0,0,0,.8)' : i % 2 === 0 ? 'rgba(0,0,0,.42)' : 'rgba(0,0,0,.3)'}
                                            />
                                        ))}
                                    </GridOverlay>
                                </Arrange>
                                <VScroll>
                                    <CircleArrow dir="up" />
                                    <VThumb />
                                    <CircleArrow dir="down" />
                                    <VPlus><PlusGlyph /></VPlus>
                                    <VSep />
                                    <MinusGlyph />
                                </VScroll>
                            </ArrangeRow>
                            <HScroll>
                                <CircleArrow dir="left" />
                                <HThumb><ThumbDot /><ThumbDot /></HThumb>
                                <HRight>
                                    <CircleArrow dir="right" />
                                    <HPlus><PlusGlyph /></HPlus>
                                    <HSep />
                                    <MinusGlyph />
                                </HRight>
                            </HScroll>
                        </RightColumn>
                    </Main>
                    <Transport>
                        <TransportGroup>
                            <TransportPill $w={108}>
                                <PillHalf><Tri d="M1 1H5V21H1ZM20 1V21L7 11Z" /></PillHalf>
                                <PillHalf><Tri d="M2 1L15 11L2 21ZM17 1H21V21H17Z" /></PillHalf>
                            </TransportPill>
                            <RecordSlot><RecordButton $size={59} /></RecordSlot>
                            <PlayButton>
                                <Tri d="M2 2L26 18L2 34L5 18Z" w={28} h={36} fill="#3e3e3e" />
                            </PlayButton>
                            <TransportPill $w={44} $ml={9}>
                                <PillHalf>
                                    <svg width="26" height="28" viewBox="0 0 26 28" fill="none">
                                        <path d="M5 21a10.5 10.5 0 0 1 12-15M21 7a10.5 10.5 0 0 1-12 15" stroke="#8f8f8f" strokeWidth="3" />
                                        <path d="M15 1L22 7L14 10ZM11 27L4 21L12 18Z" fill="#8f8f8f" />
                                    </svg>
                                </PillHalf>
                            </TransportPill>
                            <TransportPill $w={108} $ml={10}>
                                <PillHalf><Tri d="M1 1H20V21H1Z" w={21} /></PillHalf>
                                <PillHalf><Tri d="M2 1H8V21H2ZM13 1H19V21H13Z" w={21} /></PillHalf>
                            </TransportPill>
                        </TransportGroup>
                        <TimeDisplay>4.1.00 / 0:06.000</TimeDisplay>
                        <StoppedText>[Stopped]</StoppedText>
                        <SelCell $w={146} $size={22}>Selection:</SelCell>
                        <SelCell $w={164} $size={21}>1.1.00</SelCell>
                        <SelCell $w={164} $size={21}>1.1.00</SelCell>
                        <SelCell $w={117} $size={21}>0.0.00</SelCell>
                        <InfoBox $w={100} $split><span>BPM</span><span>120</span></InfoBox>
                        <InfoBox $w={78}>4/4</InfoBox>
                        <GlobalBox>
                            <GlobalHead><EnvIcon color="#6f6f6f" />GLOBAL</GlobalHead>
                            <NonePill>
                                none
                                <svg width="20" height="20" viewBox="0 0 20 20">
                                    <circle cx="10" cy="10" r="10" fill="#999" />
                                    <path d="M4 6H16L10 17Z" fill="#333" />
                                </svg>
                            </NonePill>
                        </GlobalBox>
                        <RateKnob />
                        <RateBox><span>Rate:</span><span>1.0</span></RateBox>
                    </Transport>
                </Window>
            </Desktop>
            <NoveltyDialog />
        </Page>
    )
}
